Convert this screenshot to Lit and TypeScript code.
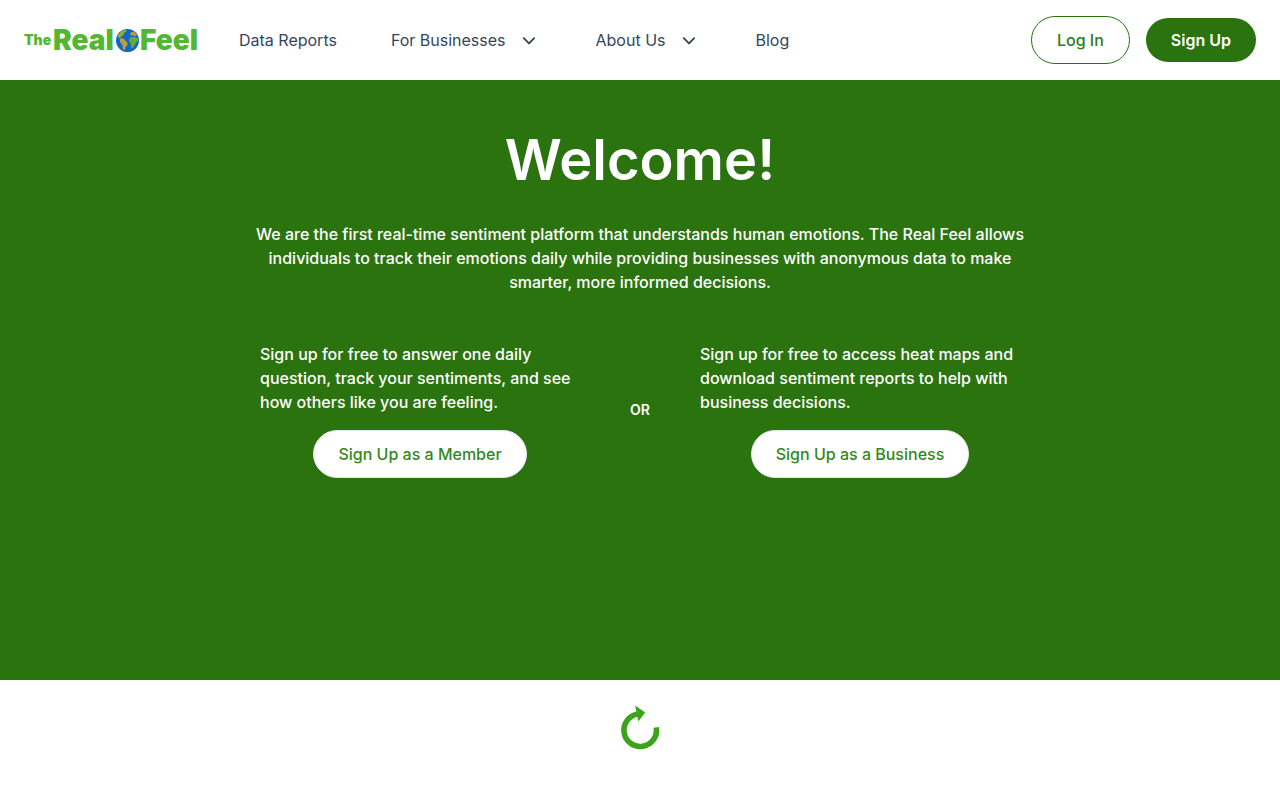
import { LitElement, html, css, svg } from "lit";
import { customElement } from "lit/decorators.js";

const chevron = svg`<path d="M1.8 2.2 7 7.4l5.2-5.2" fill="none" stroke="currentColor" stroke-width="1.9" stroke-linecap="round" stroke-linejoin="round" />`;

@customElement("site-logo")
export class SiteLogo extends LitElement {
  static styles = css`
    :host { display: block; }
    .logo {
      display: flex;
      align-items: center;
      width: 176px;
      height: 32px;
      color: #54b733;
      text-decoration: none;
      font-weight: 900;
      white-space: nowrap;
    }
    .the { font-size: 14px; line-height: 32px; width: 29px; }
    .word { font-size: 28px; line-height: 32px; }
    .globe { display: block; width: 23px; height: 23px; flex: none; margin: 0 1px; }
    .real { width: 62px; }
    .feel { width: 60px; }
  `;

  render() {
    return html`
      <a class="logo" href="#" aria-label="The Real Feel">
        <span class="the">The</span>
        <span class="word real">Real</span>
        <svg class="globe" viewBox="0 0 24 24" aria-hidden="true">
          <circle cx="12" cy="12" r="12" fill="#1168c2" />
          <path d="M1.4 7.4 4.6 2.8 9.6.5l1.6 1.9-2.6 1.8L7.4 6.4 5.6 8.2 3 9.4z" fill="#8fae35" />
          <path d="M3.8 9.6l3.8.2 4.2 4.2.3 2.4-2.4 2.7-.3 3.1-2.3-1.3-.3-4.2-2.4-2.9z" fill="#c19d39" />
          <path d="M15.8 3.2 19.6 3l2.6 3.4-2.4 1.2-2.2-1-1.6.6-1.2-1.6z" fill="#b89b35" />
          <path d="M14.6 8.8l4.4-.6 4 1.6.4 3.8-2.4-.6-1 3.4-3 3.8-1.4-1-.2-4.2-2-2.4z" fill="#5fb032" />
        </svg>
        <span class="word feel">Feel</span>
      </a>
    `;
  }
}

@customElement("site-header")
export class SiteHeader extends LitElement {
  static styles = css`
    :host { display: block; }
    .bar {
      display: flex;
      align-items: center;
      box-sizing: border-box;
      height: 80px;
      padding: 0 24px;
      background: #fff;
    }
    nav { display: flex; align-items: center; margin-left: 39px; gap: 54px; }
    .item {
      display: flex;
      align-items: center;
      gap: 16px;
      margin: 0;
      padding: 0;
      border: 0;
      background: none;
      font: 400 16px/24px Inter, sans-serif;
      color: #34475a;
      text-decoration: none;
      white-space: nowrap;
      cursor: pointer;
    }
    .menu { padding-right: 6px; }
    .chevron { display: block; width: 14px; height: 9px; }
    .actions { display: flex; align-items: center; gap: 16px; margin-left: auto; }
    .button {
      box-sizing: border-box;
      border-radius: 24px;
      padding: 11px 25px;
      font: 500 16px/24px Inter, sans-serif;
      white-space: nowrap;
      cursor: pointer;
    }
    .login { border: 1px solid #2a730f; background: #fff; color: #2b800f; }
    .signup { border: 0; padding: 10px 25px; background: #2a730f; color: #fff; font-weight: 600; }
  `;

  render() {
    return html`
      <header class="bar">
        <site-logo></site-logo>
        <nav>
          <a class="item" href="#">Data Reports</a>
          <button class="item menu" type="button" aria-haspopup="true">
            For Businesses
            <svg class="chevron" viewBox="0 0 14 9" aria-hidden="true">${chevron}</svg>
          </button>
          <button class="item menu" type="button" aria-haspopup="true">
            About Us
            <svg class="chevron" viewBox="0 0 14 9" aria-hidden="true">${chevron}</svg>
          </button>
          <a class="item" href="#">Blog</a>
        </nav>
        <div class="actions">
          <button class="button login" type="button">Log In</button>
          <button class="button signup" type="button">Sign Up</button>
        </div>
      </header>
    `;
  }
}

@customElement("welcome-hero")
export class WelcomeHero extends LitElement {
  static styles = css`
    :host { display: block; }
    .hero {
      display: flex;
      flex-direction: column;
      align-items: center;
      box-sizing: border-box;
      min-height: 600px;
      padding: 44px 24px;
      background: #2a730f;
      color: #fff;
      font: 500 16px/24px Inter, sans-serif;
    }
    h1 { margin: 0; font-size: 56px; line-height: 72px; font-weight: 600; }
    p { margin: 0; }
    .intro { max-width: 800px; margin-top: 26px; text-align: center; }
    .choices {
      display: grid;
      grid-template-columns: minmax(0, 320px) 120px minmax(0, 320px);
      align-items: center;
      margin-top: 48px;
    }
    .choice { display: flex; flex-direction: column; align-items: center; gap: 16px; }
    .choice p { align-self: stretch; }
    .or { text-align: center; font-size: 14px; line-height: 20px; font-weight: 600; }
    .button {
      border: 1px solid #e4e7ec;
      border-radius: 24px;
      padding: 11px 24px;
      background: #fff;
      color: #32891a;
      font: 500 16px/24px Inter, sans-serif;
      cursor: pointer;
    }
  `;

  render() {
    return html`
      <section class="hero">
        <h1>Welcome!</h1>
        <p class="intro">
          We are the first real-time sentiment platform that understands human emotions. The Real Feel allows
          individuals to track their emotions daily while providing businesses with anonymous data to make
          smarter, more informed decisions.
        </p>
        <div class="choices">
          <div class="choice">
            <p>Sign up for free to answer one daily question, track your sentiments, and see how others like you are feeling.</p>
            <button class="button" type="button">Sign Up as a Member</button>
          </div>
          <div class="or">OR</div>
          <div class="choice">
            <p>Sign up for free to access heat maps and download sentiment reports to help with business decisions.</p>
            <button class="button" type="button">Sign Up as a Business</button>
          </div>
        </div>
      </section>
    `;
  }
}

@customElement("app-root")
export class AppRoot extends LitElement {
  static styles = css`
    :host { display: block; min-height: 100vh; background: #fff; font-family: Inter, sans-serif; }
    .loading { display: flex; justify-content: center; padding: 24px 0; }
    .spinner { display: block; width: 48px; height: 48px; }
  `;

  render() {
    return html`
      <site-header></site-header>
      <main>
        <welcome-hero></welcome-hero>
        <div class="loading" role="status" aria-label="Loading">
          <svg class="spinner" viewBox="0 0 48 48" aria-hidden="true">
            <path d="M40.3 23.4A16.3 16.3 0 1 1 22 10" fill="none" stroke="#3aa51a" stroke-width="5.6" />
            <path d="M19.2 1.6 29.2 8.4 22.2 17.6z" fill="#3aa51a" />
          </svg>
        </div>
      </main>
    `;
  }
}
